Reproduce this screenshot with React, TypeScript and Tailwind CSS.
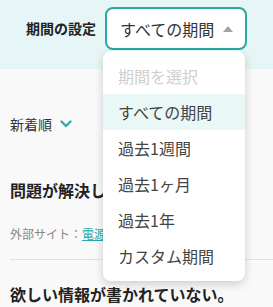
export default function App() {
  const options = ["すべての期間", "過去1週間", "過去1ヶ月", "過去1年", "カスタム期間"];

  return (
    <div
      className="relative h-[307px] w-full overflow-hidden bg-[#f9f9f9] text-[#333]"
      style={{ fontFamily: '"Noto Sans CJK JP", "Noto Sans", sans-serif' }}
    >
      {/* period filter bar */}
      <div className="flex h-[69px] items-start bg-[#e6f5f5] pl-[26px] pt-[7px]">
        <div className="mr-[9px] flex h-[43px] items-center text-[14px] font-bold text-[#222]">期間の設定</div>
        <div className="flex h-[43px] w-[142px] items-center justify-between rounded-[8px] border-2 border-[#2ba8a5] bg-white pl-[13px] pr-[12px]">
          <span className="text-[16px] text-[#333]">すべての期間</span>
          <svg width="10" height="6" viewBox="0 0 10 6">
            <polygon points="0,6 10,6 5,0" fill="#9aa5a8" />
          </svg>
        </div>
      </div>

      {/* list content */}
      <div className="pl-[10px]">
        <div className="mt-[43px] flex h-[24px] items-center gap-[8px] text-[14px] text-[#333]">
          新着順
          <svg width="12" height="8" viewBox="0 0 12 8">
            <polyline points="1.5,1.5 6,6 10.5,1.5" fill="none" stroke="#2ba8a5" strokeWidth="2.2" strokeLinecap="round" />
          </svg>
        </div>
        <div className="mt-[42px] h-[24px] whitespace-nowrap text-[16px] leading-[24px] font-bold text-[#222]">
          問題が解決しない場合は
        </div>
        <div className="mt-[23px] h-[18px] whitespace-nowrap text-[12px] leading-[18px] text-[#888]">
          外部サイト：<span className="text-[#2ba8a5] underline">電源が入らない場合</span>
        </div>
        <div className="mt-[16px] border-t border-[#e2e2e2]" />
        <div className="mt-[22px] whitespace-nowrap text-[16px] leading-[24px] font-bold text-[#222]">
          欲しい情報が書かれていない。
        </div>
      </div>

      {/* open dropdown menu */}
      <div className="absolute left-[103px] top-[51px] w-[142px] rounded-[8px] bg-white py-[7px] shadow-[0_3px_10px_rgba(0,0,0,0.18)]">
        <div className="flex h-[36px] items-center pl-[15px] text-[16px] text-[#cfcfcf]">期間を選択</div>
        {options.map((o, i) => (
          <div
            key={o}
            className={`flex h-[36px] items-center pl-[15px] text-[16px] text-[#444] ${i === 0 ? "bg-[#eaf7f7]" : ""}`}
          >
            {o}
          </div>
        ))}
      </div>
    </div>
  );
}
